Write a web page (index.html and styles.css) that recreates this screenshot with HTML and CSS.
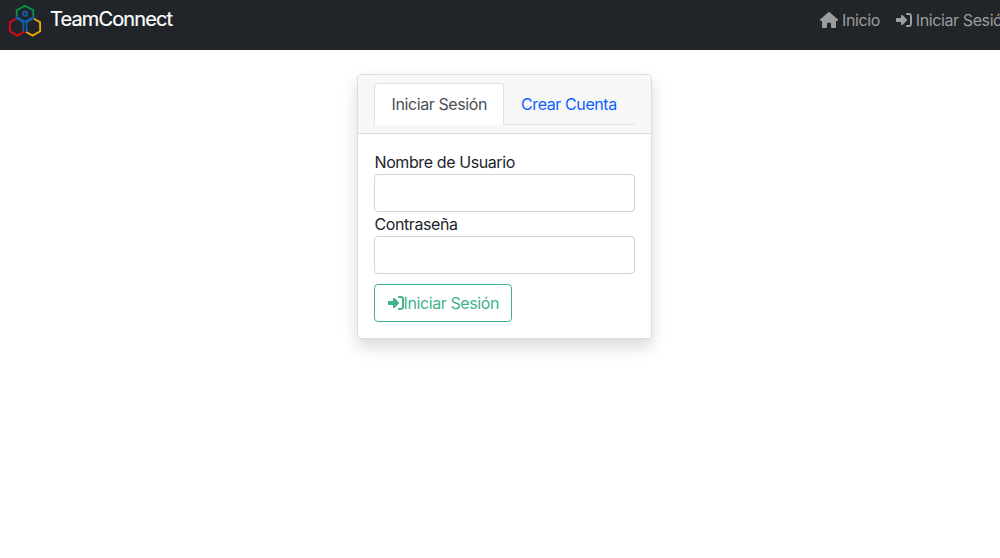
FILE: index.html
```html
<!DOCTYPE html>
<html lang="es">
<head>
<meta charset="utf-8">
<title>TeamConnect</title>
<link rel="stylesheet" href="styles.css">
</head>
<body>
<svg class="sprite" aria-hidden="true">
  <symbol id="login" viewBox="0 0 512 512"><path d="M217.900 105.900L340.700 228.700c7.200 7.200 11.300 17.100 11.300 27.300s-4.100 20.100-11.300 27.300L217.900 406.100c-6.400 6.400-15 9.900-24 9.900c-18.700 0-33.900-15.200-33.900-33.900V320H32c-17.700 0-32-14.300-32-32V224c0-17.700 14.300-32 32-32H160V129.900c0-18.700 15.200-33.900 33.900-33.900c9 0 17.600 3.600 24 9.900zM352 416h64c17.700 0 32-14.300 32-32V128c0-17.700-14.300-32-32-32H352c-17.700 0-32-14.300-32-32s14.300-32 32-32h64c53 0 96 43 96 96V384c0 53-43 96-96 96H352c-17.700 0-32-14.300-32-32s14.300-32 32-32z"/></symbol>
</svg>
<header class="navbar">
  <a class="brand">
    <svg class="logo" viewBox="0 0 34 34" fill="none" stroke-width="1.800">
      <path d="M8.800 14.200L1.900 18.200V27.300L9.300 31.600L16.200 27.800" stroke="#e30613"/>
      <path d="M25.200 14.200L32.100 18.200V27.300L24.700 31.600L17.800 27.800" stroke="#f2a900"/>
      <path d="M8.700 13V6.300L17 1.700L25.300 6.300V13" stroke="#009a44"/>
      <path d="M8.700 11.500V14.200L15.400 18.300V27.500M25.300 11.500V14.200L18.600 18.300V27.500M10 13.800L17 17.700L24 13.800" stroke="#0f5fae"/>
      <circle cx="17" cy="9.700" r="2.100" stroke="#0f5fae"/>
    </svg>
    <span class="brand-name">TeamConnect</span>
  </a>
  <nav class="links">
    <a class="link"><svg class="icon home" viewBox="0 0 576 512"><path d="M575.800 255.500c0 18-15 32.100-32 32.100h-32l.7 160.200c0 2.700-.2 5.400-.5 8.100V472c0 22.100-17.900 40-40 40H392c-22.100 0-40-17.900-40-40V376c0-17.700-14.300-32-32-32H256c-17.700 0-32 14.300-32 32V472c0 22.100-17.900 40-40 40H104c-22.100 0-40-17.900-40-40V287.600H32c-18 0-32-14-32-32.100c0-9 3-17 10-24L266.400 8c7-7 15-8 22-8s15 2 21 7L564.800 231.500c8 7 12 15 11 24z"/></svg><span>Inicio</span></a>
    <a class="link"><svg class="icon"><use href="#login"/></svg><span>Iniciar Sesión</span></a>
  </nav>
</header>
<main class="page">
  <section class="card">
    <div class="card-header">
      <div class="tabs">
        <a class="tab active">Iniciar Sesión</a>
        <a class="tab">Crear Cuenta</a>
      </div>
    </div>
    <form class="card-body">
      <label class="label" for="user">Nombre de Usuario</label>
      <input class="input" id="user" type="text">
      <label class="label" for="pass">Contraseña</label>
      <input class="input" id="pass" type="password">
      <button class="submit" type="button"><svg class="icon"><use href="#login"/></svg><span>Iniciar Sesión</span></button>
    </form>
  </section>
</main>
</body>
</html>
```
FILE: styles.css
```css
* { box-sizing: border-box; }
body {
  margin: 0;
  min-height: 100vh;
  background: #fff;
  color: #212529;
  font: 16px/24px Inter, "Liberation Sans", sans-serif;
  letter-spacing: -0.4px;
  overflow-x: hidden;
}
.sprite { display: none; }
.icon { width: 16px; height: 16px; fill: currentColor; flex: none; }
.navbar {
  height: 50px;
  background: #212529;
  display: flex;
  justify-content: space-between;
  padding: 4px 0 0 8px;
  white-space: nowrap;
}
.brand { display: flex; color: #fff; }
.logo { width: 34px; height: 34px; }
.brand-name {
  margin-left: 8px;
  font-size: 20px;
  line-height: 30px;
  letter-spacing: -0.88px;
  -webkit-text-stroke: 0.2px #fff;
}
.links { display: flex; gap: 16px; width: 180px; color: #9b9d9e; padding-top: 4px; }
.link { display: flex; align-items: center; gap: 4px; height: 24px; flex: none; }
.home { width: 18px; }
.page { padding: 24px 0 0 357px; }
.card {
  width: 295px;
  border: 1px solid #dcddde;
  border-radius: 4px;
  background: #fff;
  box-shadow: 0 8px 16px rgba(0, 0, 0, .15);
}
.card-header {
  padding: 8px 16px;
  background: #f7f7f7;
  border-bottom: 1px solid #d8d9da;
  border-radius: 3px 3px 0 0;
}
.tabs { display: flex; height: 42px; border-bottom: 1px solid #dee2e6; }
.tab {
  height: 42px;
  padding: 8px 16px;
  border: 1px solid transparent;
  color: #0d5ffd;
  white-space: nowrap;
}
.tab.active {
  width: 130px;
  padding-left: 16.5px;
  background: #fff;
  color: #495057;
  border-color: #dee2e6 #dee2e6 #fff;
  border-radius: 4px 4px 0 0;
}
.card-body { padding: 16px; }
.label { display: block; padding-left: 0.5px; }
.input {
  display: block;
  width: 100%;
  height: 38px;
  border: 1px solid #ced4da;
  border-radius: 4px;
  background: #fff;
}
.submit {
  display: flex;
  align-items: center;
  width: 138px;
  height: 38px;
  margin-top: 10px;
  padding: 0 12.5px;
  border: 1px solid #41b38a;
  border-radius: 4px;
  background: #fff;
  color: #41b38a;
  font: inherit;
  letter-spacing: inherit;
  white-space: nowrap;
}
```
